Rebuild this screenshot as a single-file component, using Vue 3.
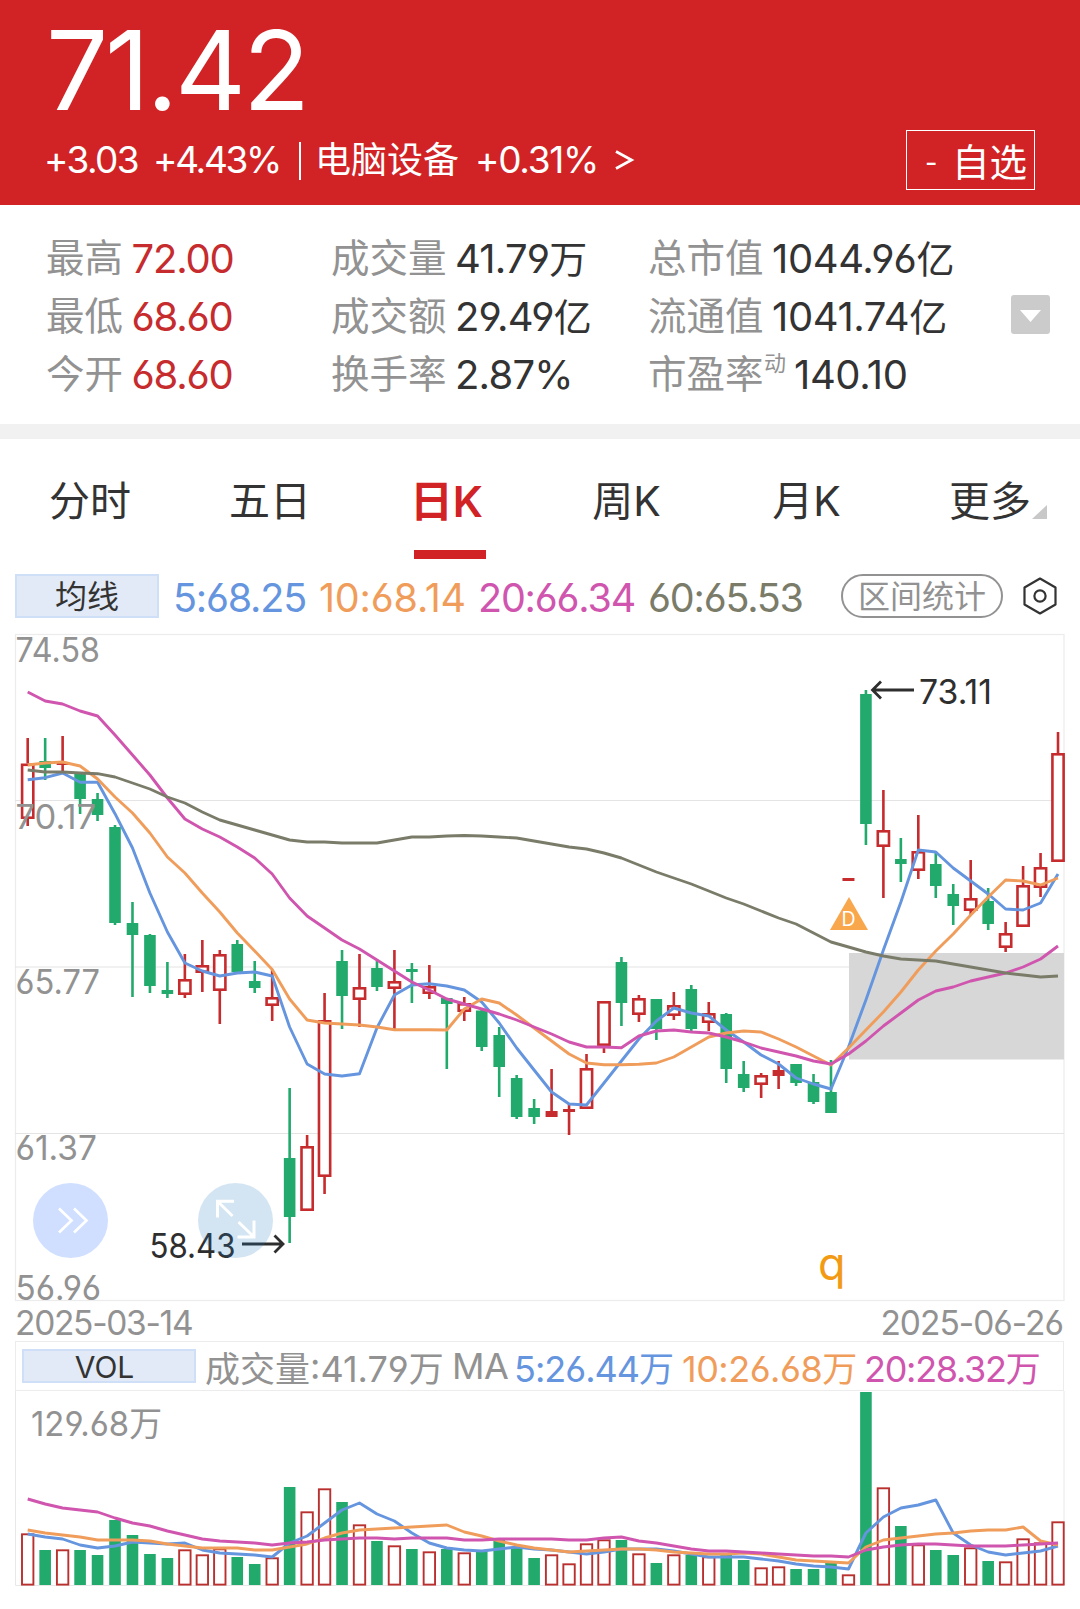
<script setup>
import { ref } from 'vue'

const current = ref('日K')
const tabs = ['分时', '五日', '日K', '周K', '月K', '更多']

const stats = [
    [
        { label: '最高', value: '72.00', up: true },
        { label: '最低', value: '68.60', up: true },
        { label: '今开', value: '68.60', up: true }
    ],
    [
        { label: '成交量', value: '41.79', unit: '万' },
        { label: '成交额', value: '29.49', unit: '亿' },
        { label: '换手率', value: '2.87%' }
    ],
    [
        { label: '总市值', value: '1044.96', unit: '亿' },
        { label: '流通值', value: '1041.74', unit: '亿' },
        { label: '市盈率', sup: '动', value: '140.10' }
    ]
]

const STEP = 17.463
const xOf = (i) => 27.7 + i * STEP

// kind, high, body top, body bottom, low, volume top
const days = [
    ['r', 738, 763.5, 819, 826, 1533], ['g', 738, 761, 768, 780, 1549], ['r', 736, 763, 765, 772, 1549],
    ['g', 774, 774, 799, 814, 1549], ['g', 793, 799, 815, 821, 1554], ['g', 825, 827, 923, 925, 1519],
    ['g', 902, 923, 935, 997, 1534], ['g', 934, 935, 986, 993, 1553], ['g', 962, 990, 994, 998, 1557],
    ['r', 954, 979, 995, 998, 1549], ['r', 940, 965, 973, 992, 1554], ['r', 950, 954, 991, 1024, 1548],
    ['g', 940, 944, 972, 972, 1556], ['g', 961, 981, 988, 993, 1563], ['r', 970, 997, 1006, 1021, 1557],
    ['g', 1088, 1158, 1217, 1243, 1486], ['r', 1135, 1146, 1211, 1211, 1511], ['r', 993, 1020, 1177, 1194, 1488],
    ['g', 950, 961, 996, 1029, 1501], ['r', 954, 987, 1000, 1027, 1524], ['g', 961, 968, 987, 991, 1540],
    ['r', 950, 981, 989, 1029, 1545], ['g', 963, 969, 972, 1003, 1548], ['r', 965, 986, 994, 999, 1551],
    ['g', 998, 998, 1004, 1069, 1548], ['r', 997, 1003, 1012, 1021, 1552], ['g', 1010, 1010.5, 1047, 1051, 1550],
    ['g', 1027, 1035, 1067, 1097, 1539], ['g', 1075, 1078, 1117, 1119, 1547], ['g', 1099, 1108, 1117, 1124, 1557],
    ['r', 1069, 1111, 1117, 1117, 1554], ['r', 1104, 1109, 1112, 1135, 1563], ['r', 1054, 1068, 1109, 1109, 1543],
    ['r', 1001, 1001, 1046, 1053, 1539], ['g', 957, 962, 1003, 1026, 1539], ['r', 995, 998, 1015, 1022, 1553],
    ['g', 999, 999, 1029, 1040, 1562], ['r', 992, 1005, 1016, 1020, 1554], ['g', 985, 989, 1029, 1031, 1554],
    ['r', 1002, 1013, 1023, 1031, 1556], ['g', 1013, 1014, 1069, 1083, 1554], ['g', 1061, 1074, 1088, 1092, 1559],
    ['r', 1073, 1075, 1085, 1098, 1567], ['r', 1061, 1070, 1076, 1089, 1566], ['g', 1064, 1064, 1083, 1086, 1568],
    ['g', 1074, 1082, 1102, 1104, 1568], ['g', 1060, 1092, 1113, 1113, 1562], ['r', 878, 878, 881, 881, 1574],
    ['g', 690, 694, 824, 845, 1391], ['r', 790, 830, 847, 898, 1487], ['g', 838, 859, 864, 882, 1525],
    ['r', 815, 851, 871, 879, 1544], ['g', 853, 864, 886, 898, 1549], ['g', 884, 894, 906, 925, 1554],
    ['r', 860, 898, 911, 915, 1547], ['g', 888, 901, 924, 930, 1560], ['r', 922, 933, 948, 952, 1561],
    ['r', 866, 885, 927, 927, 1538], ['r', 853, 867, 888, 897, 1542], ['r', 732, 753, 862, 862, 1521]
].map(([kind, high, top, bottom, low, vol], i) => ({ kind, high, top, bottom, low, vol, x: xOf(i) }))

const line = (ys) => ys.map((y, i) => `${xOf(i).toFixed(1)},${y}`).join(' ')

const priceLines = [
    {
        color: '#6595de',
        points: line([779.7, 777.7, 773, 782.3, 782.3, 813.7, 848, 893, 932, 963, 971, 976, 973, 972, 976, 1027, 1064, 1074, 1076, 1073.7, 1027.7, 995, 985, 983.7, 986, 990, 1002, 1023, 1048, 1070, 1092, 1104, 1105, 1083, 1061, 1039, 1021, 1008, 1013, 1016, 1030, 1042, 1055, 1064, 1078, 1084, 1089, 1047, 1000, 950, 902, 850, 852, 868, 881, 894, 909, 910, 903, 874])
    },
    {
        color: '#f09d5b',
        points: line([765, 763, 762, 766, 779, 797, 813, 833, 857, 873, 893, 912, 933, 951, 969.5, 999, 1020, 1023, 1024, 1025, 1027, 1029.7, 1029.7, 1029.7, 1030, 1009, 999, 1003, 1015, 1028, 1041, 1054, 1063, 1064.7, 1064.7, 1064.3, 1063, 1057, 1047, 1037, 1033, 1031, 1032, 1039, 1047, 1056, 1065, 1048, 1030, 1012, 992, 970, 951, 934, 915, 897, 880, 881, 885, 878])
    },
    {
        color: '#d055ae',
        points: line([692, 701, 704, 711, 716, 735, 755, 775, 798, 819, 829, 837, 847, 858, 874, 898, 916, 928, 940, 949, 960, 971, 982, 990, 999, 1004, 1009, 1014, 1020, 1027, 1034, 1042, 1047, 1047, 1047.7, 1036, 1031, 1030, 1032, 1033, 1037, 1042, 1048, 1052, 1056, 1061, 1064, 1054, 1041, 1026, 1013, 1000, 991, 987, 981, 977, 973, 967, 959, 946])
    },
    {
        color: '#7a7c69',
        points: line([770, 772, 772, 773, 773.7, 777, 783, 789, 797, 803, 812, 820, 825, 830, 835, 840, 842, 842, 843, 843, 843, 840, 837, 837, 836, 835.5, 836, 837, 838, 841, 844, 847, 849, 853, 858, 865, 872, 878, 884, 891, 898, 904, 911, 918, 924, 933, 942, 947, 952, 956, 959, 960, 961, 964, 967, 970, 973, 975, 977, 976])
    }
]

const volumeLines = [
    {
        color: '#6595de',
        points: line([1533, 1536, 1538, 1544, 1547, 1545, 1541, 1542, 1543, 1542, 1549, 1552, 1553, 1554, 1556, 1542, 1535, 1522, 1509, 1502, 1513, 1520, 1532, 1542, 1547, 1549, 1550, 1548, 1546, 1548, 1549, 1551, 1553, 1551, 1548, 1548, 1548, 1550, 1553, 1556, 1556, 1556, 1558, 1560, 1563, 1565, 1566, 1568, 1532, 1516, 1507, 1504, 1499, 1532, 1544, 1551, 1554, 1552, 1550, 1545])
    },
    {
        color: '#f09d5b',
        points: line([1529, 1532, 1534, 1536, 1539, 1539, 1539, 1540, 1543, 1545, 1547, 1547, 1547, 1549, 1549, 1546, 1543, 1537, 1532, 1529, 1528, 1527, 1526, 1525, 1524, 1531, 1535, 1540, 1544, 1547, 1549, 1551, 1550, 1549, 1548, 1548, 1549, 1551, 1552, 1553, 1553, 1552, 1553, 1556, 1559, 1560, 1561, 1562, 1546, 1539, 1537, 1535, 1533, 1532, 1530, 1529, 1529, 1526, 1540, 1544])
    },
    {
        color: '#d055ae',
        points: line([1498, 1503, 1507, 1509, 1511, 1517, 1522, 1525, 1530, 1534, 1538, 1540, 1541, 1542, 1544, 1542, 1541, 1539, 1538, 1537, 1537, 1538, 1537, 1537, 1537, 1539, 1539, 1538, 1538, 1538, 1538, 1539, 1539, 1537, 1536, 1540, 1542, 1545, 1548, 1550, 1550, 1551, 1552, 1553, 1554, 1555, 1555, 1556, 1549, 1546, 1544, 1543, 1543, 1544, 1545, 1545, 1545, 1544, 1543, 1542])
    }
]

const priceLabels = [
    { text: '74.58', y: 662, w: 82 },
    { text: '70.17', y: 828.5, w: 78 },
    { text: '65.77', y: 994, w: 82 },
    { text: '61.37', y: 1160, w: 79 },
    { text: '56.96', y: 1300, w: 83 }
]
</script>

<template>
    <div class="page">
        <header class="quote">
            <div class="price">71.42</div>
            <div class="change">
                <span class="c1">+3.03</span>
                <span class="c2">+4.43%</span>
                <i class="bar"></i>
                <span class="c3">电脑设备</span>
                <span class="c4">+0.31%</span>
                <svg width="20" height="24" viewBox="0 0 20 24"><path d="M1 3.5 L16.5 12 L1 20.5" fill="none" stroke="#fff" stroke-width="2.8" /></svg>
                <button class="watch"><span>-</span>自选</button>
            </div>
        </header>

        <section class="stats">
            <div v-for="(col, c) in stats" :key="c" class="col" :class="'col' + c">
                <div v-for="s in col" :key="s.label" class="stat">
                    <span class="label">{{ s.label }}</span>
                    <span v-if="s.sup" class="sup">{{ s.sup }}</span>
                    <span class="value" :class="{ up: s.up, long: s.unit }">{{ s.value }}<span v-if="s.unit" class="unit">{{ s.unit }}</span></span>
                </div>
            </div>
            <div class="expand">
                <svg width="39" height="39" viewBox="0 0 39 39"><path d="M9 15 H30 L19.5 27 Z" fill="#fff" /></svg>
            </div>
        </section>

        <nav class="tabs">
            <div v-for="t in tabs" :key="t" class="tab" :class="{ active: t === current, k: t.endsWith('K') }" @click="current = t">
                <span>{{ t }}</span>
                <svg v-if="t === '更多'" class="corner" width="15" height="14" viewBox="0 0 15 14"><path d="M15 0 V14 H0 Z" fill="#c8c8c8" /></svg>
            </div>
        </nav>

        <div class="legend">
            <div class="tag">均线</div>
            <span class="ma m5">5:68.25</span>
            <span class="ma m10">10:68.14</span>
            <span class="ma m20">20:66.34</span>
            <span class="ma m60">60:65.53</span>
            <div class="pill">区间统计</div>
            <svg class="gear" width="36" height="40" viewBox="0 0 36 40" fill="none" stroke="#333" stroke-width="2.2">
                <path d="M18 2.5 L33.5 11.5 V28.5 L18 37.5 L2.5 28.5 V11.5 Z" stroke-linejoin="round" />
                <circle cx="18" cy="20" r="5.6" />
            </svg>
        </div>

        <svg class="chart" width="1080" height="680" viewBox="0 624 1080 680">
            <g stroke="#e4e4e4" stroke-width="1.2" fill="none">
                <rect x="15.5" y="634.5" width="1048.5" height="666" stroke="#ececec" />
                <path d="M15 800.5 H1064 M15 967 H1064 M15 1133.5 H1064" />
            </g>
            <rect x="849" y="953" width="215" height="106.5" fill="#d7d7d7" />

            <g v-for="d in days" :key="d.x">
                <template v-if="d.kind === 'g'">
                    <rect :x="d.x - 1.3" :y="d.high" width="2.6" :height="d.low - d.high" fill="#22aa6d" />
                    <rect :x="d.x - 5.8" :y="d.top" width="11.6" :height="d.bottom - d.top" fill="#22aa6d" />
                </template>
                <template v-else>
                    <rect :x="d.x - 1.3" :y="d.high" width="2.6" :height="d.top - d.high" fill="#c62b2d" />
                    <rect :x="d.x - 1.3" :y="d.bottom" width="2.6" :height="d.low - d.bottom" fill="#c62b2d" />
                    <rect v-if="d.bottom - d.top < 6.5" :x="d.x - 6" :y="d.top" width="12" :height="d.bottom - d.top" fill="#c62b2d" />
                    <rect v-else :x="d.x - 5.6" :y="d.top + 1.3" width="11.2" :height="d.bottom - d.top - 2.6" fill="#fff" stroke="#c62b2d" stroke-width="2.6" />
                </template>
            </g>

            <polyline v-for="l in priceLines" :key="l.color" :points="l.points" fill="none" :stroke="l.color" stroke-width="2.9" stroke-linejoin="round" />

            <g class="num" font-size="34.5" fill="#929292">
                <text v-for="p in priceLabels" :key="p.text" x="15.5" :y="p.y" :textLength="p.w + 2.5" lengthAdjust="spacingAndGlyphs">{{ p.text }}</text>
            </g>

            <path d="M849 897 L868 930 H830 Z" fill="#f8a74c" />
            <text class="num" x="848.5" y="926" font-size="19.5" fill="#fff" text-anchor="middle">D</text>

            <g class="num" font-size="34" fill="#2e2e2e">
                <text x="919" y="704" textLength="73" lengthAdjust="spacingAndGlyphs">73.11</text>
                <text x="149.5" y="1258" textLength="86" lengthAdjust="spacingAndGlyphs">58.43</text>
            </g>
            <g stroke="#2e2e2e" stroke-width="2.8" fill="none">
                <path d="M914 690 H872.5 M881 681.5 L872.5 690 L881 698.5" />
                <path d="M242 1244 H283 M274.5 1235.5 L283 1244 L274.5 1252.5" />
            </g>

            <circle cx="70.5" cy="1220.5" r="37.5" fill="#d0dfff" />
            <path d="M59 1208.5 L71.5 1220.5 L59 1232.5 M74 1208.5 L86.5 1220.5 L74 1232.5" fill="none" stroke="#fff" stroke-width="2.7" />
            <circle cx="235.5" cy="1220.5" r="37.5" fill="#2478be" fill-opacity="0.2" />
            <path d="M234 1201.2 H217.5 V1217.5 M217.5 1201.2 L232.5 1216 M237.5 1237 H254 V1220.5 M254 1237 L238.5 1222" fill="none" stroke="#fff" stroke-width="3" />
            <text class="num" x="818" y="1280" font-size="45" fill="#f39a14">q</text>
        </svg>

        <div class="dates">
            <span>2025-03-14</span>
            <span class="end">2025-06-26</span>
        </div>

        <div class="volhead">
            <div class="voltag">VOL</div>
            <span class="v0"><span class="cn">成交量</span>:41.79<span class="cn">万</span></span>
            <span class="v1">MA</span>
            <span class="v2">5:26.44<span class="cn">万</span></span>
            <span class="v3">10:26.68<span class="cn">万</span></span>
            <span class="v4">20:28.32<span class="cn">万</span></span>
        </div>

        <svg class="chart" width="1080" height="219" viewBox="0 1390 1080 219">
            <path d="M15.5 1390 V1584.5 H1064 V1390" fill="none" stroke="#e8e8e8" />
            <g v-for="d in days" :key="d.x">
                <rect v-if="d.kind === 'g'" :x="d.x - 5.8" :y="d.vol" width="11.6" :height="1584 - d.vol" fill="#22aa6d" />
                <rect v-else :x="d.x - 5.7" :y="d.vol + 0.3" width="11.4" :height="1583.3 - d.vol" fill="#fff" stroke="#b9302f" stroke-width="1.9" />
            </g>
            <polyline v-for="l in volumeLines" :key="l.color" :points="l.points" fill="none" :stroke="l.color" stroke-width="2.9" stroke-linejoin="round" />
            <text class="num" x="31" y="1435" font-size="34" fill="#929292" textLength="131" lengthAdjust="spacingAndGlyphs">129.68万</text>
        </svg>
    </div>
</template>

<style>
    body{
        margin: 0;
        background: #fff;
    }
</style>

<style scoped>
    .page{
        width: 1080px;
        height: 1609px;
        overflow: hidden;
        background: #fff;
        color: #333;
        font-family: Inter, "Noto Sans CJK SC", sans-serif;
        font-feature-settings: "cv03", "cv04";
        white-space: nowrap;
    }
    .num{
        font-family: Inter, "Noto Sans CJK SC", sans-serif;
    }
    .chart{
        display: block;
    }
    .quote{
        box-sizing: border-box;
        height: 205px;
        padding: 20px 45px 0 44px;
        background: #d12325;
        color: #fff;
    }
    .price{
        height: 110px;
        padding-left: 2px;
        line-height: 101px;
        font-size: 110px;
        letter-spacing: -3.2px;
    }
    .change{
        display: flex;
        align-items: center;
        height: 60px;
        font-size: 37px;
    }
    .c1{
        width: 109px;
        padding-bottom: 2px;
        letter-spacing: -1.6px;
    }
    .c2{
        width: 146px;
        padding-bottom: 2px;
        letter-spacing: -2.3px;
    }
    .bar{
        width: 2px;
        height: 38px;
        margin: 2px 14px 0 0;
        background: #fff;
    }
    .c3{
        width: 160px;
        padding-bottom: 6px;
        font-size: 36px;
    }
    .c4{
        width: 140px;
        padding-bottom: 2px;
        letter-spacing: -1.3px;
    }
    .watch{
        box-sizing: border-box;
        display: flex;
        align-items: center;
        justify-content: space-between;
        width: 129px;
        height: 60px;
        margin-left: auto;
        padding: 0 7px 2px 18px;
        border: 1px solid #fff;
        background: none;
        color: #fff;
        font-family: inherit;
        font-size: 37.5px;
    }
    .watch span{
        padding-top: 6px;
        font-size: 27px;
    }
    .stats{
        display: flex;
        box-sizing: border-box;
        height: 219px;
        padding: 24px 0 0 46px;
    }
    .col0{
        width: 285px;
    }
    .col1{
        width: 317px;
    }
    .col2{
        width: 363px;
    }
    .stat{
        display: flex;
        align-items: center;
        height: 58px;
    }
    .label{
        margin-right: 8.5px;
        padding-bottom: 6px;
        color: #929292;
        font-size: 38.5px;
    }
    .sup{
        align-self: flex-start;
        margin: 0 8px 0 -8px;
        color: #929292;
        font-size: 22px;
    }
    .value{
        font-size: 40px;
        letter-spacing: -1.2px;
    }
    .value.long{
        padding-bottom: 3px;
    }
    .col1 .value{
        letter-spacing: -0.8px;
    }
    .col2 .value{
        letter-spacing: -0.4px;
    }
    .value.up{
        color: #c62b2d;
    }
    .unit{
        font-size: 38px;
    }
    .expand{
        width: 39px;
        height: 39px;
        margin-top: 66px;
        border-radius: 3px;
        background: #cbcbcb;
    }
    .tabs{
        display: flex;
        height: 120px;
        border-top: 15px solid #f1f1f1;
    }
    .tab{
        display: flex;
        position: relative;
        box-sizing: border-box;
        width: 180px;
        justify-content: center;
        height: 120px;
        line-height: 125px;
        font-size: 41px;
    }
    .tab.k{
        padding-right: 7px;
    }
    .tab.active{
        color: #d12325;
        font-weight: 600;
        font-size: 43px;
    }
    .tab.active::after{
        content: "";
        position: absolute;
        left: 54px;
        bottom: 0;
        width: 72px;
        height: 9px;
        background: #d12325;
    }
    .corner{
        position: absolute;
        right: 33px;
        top: 66px;
    }
    .legend{
        display: flex;
        align-items: center;
        height: 44px;
        padding: 15px 22px 6px 15px;
    }
    .tag{
        box-sizing: border-box;
        width: 144px;
        height: 44px;
        margin-right: 14px;
        border: 2px solid #d0dff8;
        background: #e1eaf6;
        text-align: center;
        line-height: 42px;
        font-size: 32px;
    }
    .ma{
        padding-top: 3px;
        font-size: 39.5px;
        letter-spacing: -1.2px;
    }
    .m5{
        width: 146px;
        color: #6595de;
    }
    .m10{
        width: 159px;
        color: #f09d5b;
        letter-spacing: -0.2px;
    }
    .m20{
        width: 170px;
        color: #d055ae;
    }
    .m60{
        width: 193px;
        color: #7a7c69;
    }
    .pill{
        box-sizing: border-box;
        width: 162px;
        height: 44px;
        border: 2px solid #929292;
        border-radius: 22px;
        color: #929292;
        text-align: center;
        line-height: 41px;
        font-size: 32px;
    }
    .gear{
        margin-left: 19px;
    }
    .dates{
        display: flex;
        justify-content: space-between;
        height: 37px;
        padding: 0 17px 0 15px;
        line-height: 39px;
        color: #929292;
        font-size: 33.5px;
        letter-spacing: -1.3px;
    }
    .end{
        letter-spacing: -1px;
    }
    .volhead{
        box-sizing: border-box;
        display: flex;
        align-items: center;
        width: 1049px;
        height: 50px;
        margin-left: 15px;
        border: 1.5px solid #ececec;
        font-size: 36px;
        color: #929292;
    }
    .voltag{
        box-sizing: border-box;
        width: 174px;
        height: 34px;
        margin: 0 9px 0 6px;
        border: 2px solid #d0dff8;
        background: #e1eaf6;
        color: #333;
        text-align: center;
        line-height: 32px;
        font-size: 30px;
        padding-right: 9px;
    }
    .v0{
        width: 247px;
    }
    .v1{
        width: 62px;
        letter-spacing: -0.5px;
    }
    .v2{
        width: 168px;
        color: #6595de;
        letter-spacing: -1px;
    }
    .v3{
        width: 182px;
        color: #f09d5b;
        letter-spacing: -0.5px;
    }
    .v4{
        color: #d055ae;
        letter-spacing: -1.3px;
    }
    .cn{
        font-size: 35px;
    }
</style>
